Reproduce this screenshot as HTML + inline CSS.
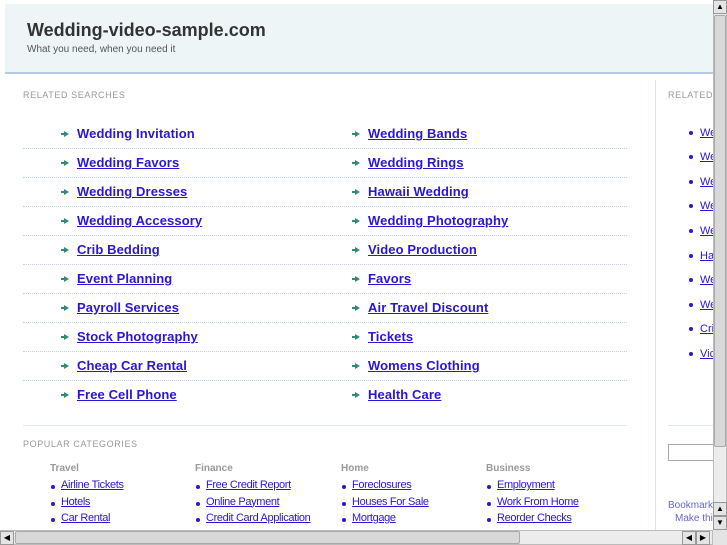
<!DOCTYPE html>
<html><head><meta charset="utf-8"><style>
*{margin:0;padding:0;box-sizing:border-box}
html,body{width:727px;height:545px;overflow:hidden;background:#fff;font-family:"Liberation Sans",sans-serif}
.abs{position:absolute}
#hdr{left:5px;top:4px;width:708px;height:70px;background:#eef5f7;border-bottom:2px solid #b5c9e8}
#hdr h1{position:absolute;left:22px;top:16px;font-size:18px;color:#333;font-weight:bold}
#hdr p{position:absolute;left:22px;top:40px;font-size:10px;color:#555}
.lab{font-size:9px;color:#999;letter-spacing:0.6px}
.bl{font-size:13px;font-weight:bold;color:#2a15d8;text-decoration:underline;letter-spacing:0.1px;white-space:nowrap}
.arr{width:0;height:0;border-left:5px solid #2f8a7a;border-top:3px solid transparent;border-bottom:3px solid transparent}
.arr:before{content:"";position:absolute;left:-8px;top:-1px;width:4px;height:2px;background:#2f8a7a}
.dot{height:0;border-top:1px dotted #b9d0ee}
.ch{font-size:10px;font-weight:bold;color:#999}
.sl{font-size:11px;color:#2a15d8;text-decoration:underline;letter-spacing:-0.35px;white-space:nowrap}
.b{width:4px;height:4px;border-radius:2px;background:#2a15d8}
.sb{background:#ececec;border:1px solid #bbb}
.btn{background:#e4e4e4;border:1px solid #999;font-size:8px;text-align:center;line-height:12px;color:#000}
</style></head><body>
<div id="hdr" class="abs"><h1>Wedding-video-sample.com</h1><p>What you need, when you need it</p></div>
<div class="abs lab" style="left:23px;top:90px">RELATED SEARCHES</div>
<div class="abs" style="left:655px;top:80px;width:1px;height:450px;background:#d7e2f3"></div>
<div class="abs lab" style="left:668px;top:90px">RELATED</div>

<div id="rows"></div>
<div class="abs" style="left:23px;top:425px;width:604px;border-top:1px solid #dde7f5"></div>
<div class="abs lab" style="left:23px;top:439px">POPULAR CATEGORIES</div>
<div id="cats"></div>

<div class="abs" style="left:668px;top:425px;width:45px;border-top:1px solid #dde7f5"></div>
<div class="abs" style="left:668px;top:444px;width:50px;height:17px;border:1px solid #aaa"></div>
<div class="abs" style="left:668px;top:500px;font-size:10px;color:#6666cc">Bookmark</div>
<div class="abs" style="left:675px;top:513px;font-size:10px;color:#6666cc">Make thi</div>

<div class="abs sb" style="left:713px;top:0;width:14px;height:530px"></div>
<div class="abs btn" style="left:713px;top:0;width:14px;height:14px">▲</div>
<div class="abs" style="left:714px;top:15px;width:12px;height:432px;background:#d8d8d8;border:1px solid #aaa;border-radius:2px"></div>
<div class="abs btn" style="left:713px;top:502px;width:14px;height:14px">▲</div>
<div class="abs btn" style="left:713px;top:516px;width:14px;height:14px">▼</div>
<div class="abs sb" style="left:0;top:530px;width:713px;height:15px"></div>
<div class="abs btn" style="left:0;top:531px;width:14px;height:14px">◀</div>
<div class="abs" style="left:15px;top:531px;width:505px;height:13px;background:#d8d8d8;border:1px solid #aaa;border-radius:2px"></div>
<div class="abs btn" style="left:682px;top:531px;width:14px;height:14px">◀</div>
<div class="abs btn" style="left:696px;top:531px;width:14px;height:14px">▶</div>
<div class="abs" style="left:713px;top:530px;width:14px;height:15px;background:#e4e4e4"></div>

<script>
var L=["Wedding Invitation","Wedding Favors","Wedding Dresses","Wedding Accessory","Crib Bedding","Event Planning","Payroll Services","Stock Photography","Cheap Car Rental","Free Cell Phone"];
var R=["Wedding Bands","Wedding Rings","Hawaii Wedding","Wedding Photography","Video Production","Favors","Air Travel Discount","Tickets","Womens Clothing","Health Care"];
var h="";
for(var i=0;i<10;i++){var y=126+i*29;
h+='<div class="abs arr" style="left:64px;top:'+(y+5)+'px"></div><div class="abs bl" style="left:77px;top:'+y+'px;'+(i==0?'text-decoration:none':'')+'">'+L[i]+'</div>';
h+='<div class="abs arr" style="left:355px;top:'+(y+5)+'px"></div><div class="abs bl" style="left:368px;top:'+y+'px">'+R[i]+'</div>';
if(i<9)h+='<div class="abs dot" style="left:23px;top:'+(y+22)+'px;width:604px"></div>';}
var ry=[133,157,182,206,231,256,280,305,329,354],rt=["We","We","We","We","We","Ha","We","We","Cri","Vic"];
for(var i=0;i<10;i++){h+='<div class="abs b" style="left:689px;top:'+(ry[i]-2)+'px"></div><div class="abs sl" style="left:700px;top:'+(ry[i]-6)+'px;letter-spacing:0">'+rt[i]+'</div>';}
document.getElementById("rows").innerHTML=h;
var C=[["Travel","Airline Tickets","Hotels","Car Rental"],["Finance","Free Credit Report","Online Payment","Credit Card Application"],["Home","Foreclosures","Houses For Sale","Mortgage"],["Business","Employment","Work From Home","Reorder Checks"]];
var X=[50,195,341,486],g="";
for(var c=0;c<4;c++){g+='<div class="abs ch" style="left:'+X[c]+'px;top:463px">'+C[c][0]+'</div>';
for(var j=1;j<4;j++){var y=486+(j-1)*16.5;g+='<div class="abs b" style="left:'+(X[c]+1)+'px;top:'+(y-1)+'px"></div><div class="abs sl" style="left:'+(X[c]+11)+'px;top:'+(y-7)+'px">'+C[c][j]+'</div>';}}
document.getElementById("cats").innerHTML=g;
</script>
</body></html>
